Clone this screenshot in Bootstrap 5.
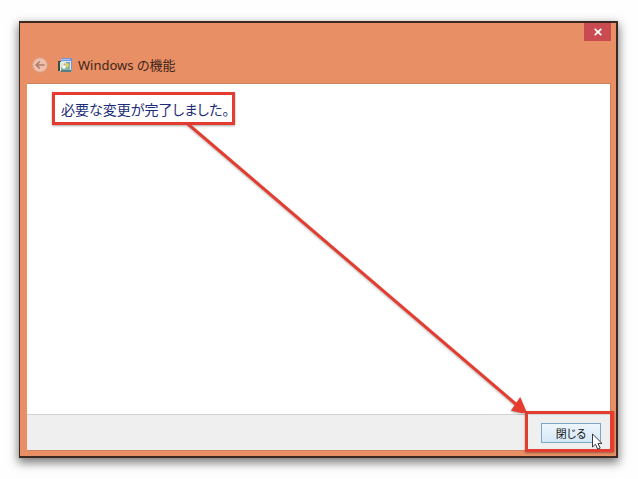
<!DOCTYPE html>
<html lang="ja">
<head>
<meta charset="utf-8">
<meta name="viewport" content="width=device-width, initial-scale=1">
<title>Windows の機能</title>
<link href="https://cdn.jsdelivr.net/npm/bootstrap@5.3.0/dist/css/bootstrap.min.css" rel="stylesheet">
<style>
body { background: #fefefe; font-family: "Noto Sans", "Noto Sans CJK JP", sans-serif; font-feature-settings: "palt"; }
.desktop { padding: 21px 20px 21px 19px; }
.window { background: #e98f65; border: 1px solid #3c2a22; border-width: 2px 2px 2px 1px; padding: 0 5px 5px 7px; box-shadow: 0 4px 9px 1px rgba(0,0,0,.5); }
.close-x { width: 27px; height: 18px; background: #c94b50; }
.caption { height: 42px; padding: 6px 0 0 5px; gap: 10px; }
.back-btn { width: 16px; height: 16px; }
.caption-text { font-size: 13px; line-height: 20px; color: #40261b; gap: 5px; }
.client { border: 1px solid #c9835f; border-width: 1px 1px 1px 0; }
.message-area { padding: 8px 25px; }
.message { font-size: 14px; line-height: 25px; color: #1c2c78; padding: 2px 3px 0 6px; border: 3px solid #e43d30; box-shadow: 0 1px 2px rgba(0,0,0,.35); }
.actions { height: 36px; background: #efefef; border-top: 1px solid #d2d2d2; padding-right: 9px; }
.close-btn { width: 60px; height: 20px; font: 11px/16px "Noto Sans CJK JP", sans-serif; font-feature-settings: "palt"; color: #111; border: 1px solid #7ba7c7; background: linear-gradient(#eef6fc, #d5e8f7); }
.button-mark { inset: -12px -13px -9px -16px; border: 3px solid #e43d30; border-right-width: 4px; box-shadow: 0 1px 2px rgba(0,0,0,.35); pointer-events: none; }
.pointer { right: -2px; bottom: -8px; }
.arrow-layer { top: 123px; left: 187px; width: calc(100vw - 299px); height: calc(100vh - 189px); pointer-events: none; filter: drop-shadow(0 1px 1px rgba(0,0,0,.3)); }
</style>
<script src="https://cdn.jsdelivr.net/npm/bootstrap@5.3.0/dist/js/bootstrap.bundle.min.js"></script>
</head>
<body>
<main class="desktop vh-100 d-flex position-relative">
  <section class="window flex-grow-1 d-flex flex-column">
    <div class="d-flex justify-content-end">
      <button class="close-x border-0 p-0 d-flex align-items-center justify-content-center" type="button" aria-label="ウィンドウを閉じる">
        <svg width="8" height="8" viewBox="0 0 8 8" stroke="#fff" stroke-width="1.7"><path d="M.7.9 7.3 7.1M7.3.9.7 7.1"/></svg>
      </button>
    </div>
    <header class="caption d-flex align-items-center">
      <button class="back-btn border-0 p-0 bg-transparent d-flex" type="button" aria-label="戻る">
        <svg width="16" height="16" viewBox="0 0 16 16" fill="none"><circle cx="8" cy="8" r="7.3" fill="#f0bea9" stroke="#d3a08b"/><path d="M12.5 8H4.5M7.8 4.5 4.2 8l3.6 3.5" stroke="#a97e6d" stroke-width="1.6"/></svg>
      </button>
      <div class="caption-text d-flex align-items-center">
        <svg width="15" height="15" viewBox="0 0 15 15"><path d="M3 0h11v13H3z" fill="#d9e7ef"/><path d="M3 0h11v3H3z" fill="#7195d8"/><path d="M3 1h9v1H3z" fill="#a9c5f3"/><path d="M0 3h2v10H0zM0 3h3v1H0z" fill="#3c4d47"/><path d="M2 4h10v9H2z" fill="#dfe9dc"/><path d="M8 4h4v5H8z" fill="#799fb1"/><path d="m3 10 4-5 2 3 3-2v6H3z" fill="#8fb1a1"/><circle cx="9" cy="7" r="2" fill="#e5ce63"/><circle cx="6" cy="9" r="1.8" fill="#fff"/><path d="M3 12h10v2H3z" fill="#557f87"/><path d="M13 3h1v10h-1z" fill="#7896c7"/></svg>
        <h1 class="caption-text m-0 fw-normal">Windows の機能</h1>
      </div>
    </header>
    <div class="client bg-white flex-grow-1 d-flex flex-column">
      <div class="message-area flex-grow-1 d-flex align-items-start">
        <p class="message m-0 text-nowrap">必要な変更が完了しました。</p>
      </div>
      <footer class="actions d-flex justify-content-end align-items-center">
        <div class="position-relative d-flex">
          <button class="close-btn p-0" type="button">閉じる</button>
          <span class="button-mark position-absolute"></span>
          <svg class="pointer position-absolute" width="12" height="18" viewBox="0 0 12 18"><path d="M1.5 1v13l3-2.8 2.2 5 2.5-1.1L7 10.4h4z" fill="#fff" stroke="#333847"/></svg>
        </div>
      </footer>
    </div>
  </section>
  <svg class="arrow-layer position-absolute" viewBox="0 0 339 290" preserveAspectRatio="none"><path d="M1 1 331 283" stroke="#e43d30" stroke-width="3"/><path d="M339 290 325.500 287 333 276z" fill="#e43d30" stroke="#e43d30" stroke-width="2"/></svg>
</main>
</body>
</html>
